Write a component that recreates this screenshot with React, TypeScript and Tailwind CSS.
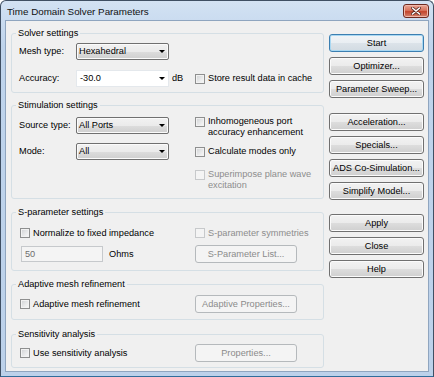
import React from "react";

function Check({ disabled }: { disabled?: boolean }) {
  return (
    <span
      className={
        "block w-[10px] h-[10px] shrink-0 border " +
        (disabled
          ? "border-[#c7c9cb] bg-[#f4f4f4]"
          : "border-[#8e8f8f] bg-[linear-gradient(135deg,#cfd1d3_0%,#e6e7e8_50%,#fbfbfb_100%)] shadow-[inset_0_0_0_1px_#f2f2f2]")
      }
    />
  );
}

function CheckRow({
  label,
  lines,
  disabled,
  className = "",
}: {
  label?: string;
  lines?: string[];
  disabled?: boolean;
  className?: string;
}) {
  const ls = lines ?? [label ?? ""];
  return (
    <div className={"flex items-start gap-[3px] " + className}>
      <span className="mt-[0.5px]">
        <Check disabled={disabled} />
      </span>
      <div className={"flex flex-col leading-[11px] " + (disabled ? "text-[#8d8d8d]" : "text-black")}>
        {ls.map((l) => (
          <span key={l} className="whitespace-nowrap">
            {l}
          </span>
        ))}
      </div>
    </div>
  );
}

function Btn({
  children,
  disabled,
  primary,
  className = "",
}: {
  children: React.ReactNode;
  disabled?: boolean;
  primary?: boolean;
  className?: string;
}) {
  const base = "h-[18px] flex items-center justify-center rounded-[3px] border whitespace-nowrap leading-[11px] ";
  const style = disabled
    ? "border-[#b5b9bc] bg-[#f4f4f4] text-[#8b8b8b]"
    : primary
    ? "border-[#3c7fb1] bg-[linear-gradient(#f1f4f7_0%,#e9eef2_50%,#dce3e9_51%,#d2dbe2_100%)] shadow-[inset_0_0_0_1px_#a9d8f2] text-black"
    : "border-[#707070] bg-[linear-gradient(#f2f2f2_0%,#ebebeb_50%,#dddddd_51%,#cfcfcf_100%)] shadow-[inset_0_0_0_1px_#fbfbfb] text-black";
  return <div className={base + style + " " + className}>{children}</div>;
}

function Arrow() {
  return (
    <svg width="6" height="3" viewBox="0 0 6 3" className="shrink-0">
      <polygon points="0,0 6,0 3,3" fill="#000" />
    </svg>
  );
}

function Select({ value }: { value: string }) {
  return (
    <div className="w-[93px] h-[17px] flex items-center justify-between pl-[2px] pr-[3px] rounded-[2px] border border-[#707070] bg-[linear-gradient(#f2f2f2_0%,#ebebeb_50%,#dddddd_51%,#cfcfcf_100%)] shadow-[inset_0_0_0_1px_#fbfbfb]">
      <span className="leading-[11px]">{value}</span>
      <Arrow />
    </div>
  );
}

function Group({
  title,
  children,
  className = "",
  bodyClass = "",
}: {
  title: string;
  children: React.ReactNode;
  className?: string;
  bodyClass?: string;
}) {
  return (
    <fieldset className={"border border-[#d5dfe5] rounded-[3px] " + className}>
      <legend className="ml-[4px] px-[2px] h-[13px] leading-[13px] text-black whitespace-nowrap">{title}</legend>
      <div className={bodyClass}>{children}</div>
    </fieldset>
  );
}

export default function App() {
  return (
    <div className="w-[434px] h-[377px] font-['Liberation_Sans',Arial,sans-serif] text-[9.2px] leading-[11px] text-black bg-white">
      <div className="w-full h-full flex flex-col rounded-t-[6px] border border-[#3f4f63] border-b-[#2f6d9a] bg-[linear-gradient(#d3e2f3_0%,#bfd4ec_12%,#bcd1ea_100%)]">
        {/* title bar */}
        <div className="h-[19px] shrink-0 flex items-start justify-between pl-[6px] pr-[4px]">
          <span className="mt-[5px] text-[9.8px] leading-[12px] text-[#111]">Time Domain Solver Parameters</span>
          <div className="mt-[3px] w-[26px] h-[14px] rounded-[3px] border border-[#6e2a20] bg-[linear-gradient(#e9a696_0%,#d8745e_45%,#c4452c_55%,#d3836f_100%)] shadow-[inset_0_0_0_1px_#f0b8aa] flex items-center justify-center">
            <svg width="10" height="8" viewBox="0 0 10 8">
              <path d="M1.5 1 L8.5 7 M8.5 1 L1.5 7" stroke="#5a2a22" strokeWidth="3" strokeLinecap="round" />
              <path d="M1.5 1 L8.5 7 M8.5 1 L1.5 7" stroke="#ffffff" strokeWidth="1.6" strokeLinecap="round" />
            </svg>
          </div>
        </div>
        {/* client area */}
        <div className="flex-1 mx-[4px] mb-[4px] border border-[#8fa5bf] bg-[#f0f0f0] flex">
          {/* left column */}
          <div className="ml-[5px] w-[313px] pt-[6px] flex flex-col">
            <Group title="Solver settings" bodyClass="pt-[3px] pb-[5px] pl-[7px] flex flex-col gap-[10px]">
              <div className="h-[17px] flex items-center">
                <span className="w-[57px]">Mesh type:</span>
                <Select value="Hexahedral" />
              </div>
              <div className="h-[17px] grid grid-cols-[176px_1fr] items-center">
                <div className="flex items-center">
                  <span className="w-[57px]">Accuracy:</span>
                  <div className="w-[93px] h-[17px] flex items-center justify-between pl-[3px] pr-[3px] border border-[#e4e8ec] bg-white">
                    <span>-30.0</span>
                    <Arrow />
                  </div>
                  <span className="ml-[3px]">dB</span>
                </div>
                <CheckRow label="Store result data in cache" />
              </div>
            </Group>

            <Group title="Stimulation settings" className="mt-[6px]" bodyClass="pl-[7px] pb-[7px] grid grid-cols-[176px_1fr]">
              <div className="pt-[5px] flex flex-col gap-[9px]">
                <div className="h-[17px] flex items-center">
                  <span className="w-[57px]">Source type:</span>
                  <Select value="All Ports" />
                </div>
                <div className="h-[17px] flex items-center">
                  <span className="w-[57px]">Mode:</span>
                  <Select value="All" />
                </div>
              </div>
              <div className="pt-[4px] flex flex-col">
                <CheckRow lines={["Inhomogeneous port", "accuracy enhancement"]} />
                <CheckRow label="Calculate modes only" className="mt-[8px]" />
                <CheckRow lines={["Superimpose plane wave", "excitation"]} disabled className="mt-[12px]" />
              </div>
            </Group>

            <Group title="S-parameter settings" className="mt-[7px]" bodyClass="pt-[8px] pb-[7px] pl-[7px] grid grid-cols-[176px_1fr] gap-y-[6px]">
              <div className="h-[12px] flex items-center ml-[1px]">
                <CheckRow label="Normalize to fixed impedance" />
              </div>
              <div className="h-[12px] flex items-center">
                <CheckRow label="S-parameter symmetries" disabled />
              </div>
              <div className="h-[18px] flex items-center">
                <div className="ml-[2px] w-[82px] h-[16px] flex items-center pl-[3px] border border-[#c6c9cc] bg-[#f4f4f4] text-[#6d6d6d]">
                  50
                </div>
                <span className="ml-[6px]">Ohms</span>
              </div>
              <Btn disabled className="w-[102px]">
                S-Parameter List...
              </Btn>
            </Group>

            <Group title="Adaptive mesh refinement" className="mt-[7px]" bodyClass="pt-[4px] pb-[6px] pl-[7px] grid grid-cols-[176px_1fr]">
              <div className="h-[18px] flex items-center ml-[1px]">
                <CheckRow label="Adaptive mesh refinement" />
              </div>
              <Btn disabled className="w-[102px]">
                Adaptive Properties...
              </Btn>
            </Group>

            <Group title="Sensitivity analysis" className="mt-[8px]" bodyClass="pt-[3px] pb-[5px] pl-[7px] grid grid-cols-[176px_1fr]">
              <div className="h-[18px] flex items-center ml-[1px]">
                <CheckRow label="Use sensitivity analysis" />
              </div>
              <Btn disabled className="w-[102px]">
                Properties...
              </Btn>
            </Group>
          </div>

          {/* right column */}
          <div className="ml-[5px] w-[95px] pt-[13px] flex flex-col">
            <div className="flex flex-col gap-[5px]">
              <Btn primary>Start</Btn>
              <Btn>Optimizer...</Btn>
              <Btn>Parameter Sweep...</Btn>
            </div>
            <div className="mt-[15px] flex flex-col gap-[5px]">
              <Btn>Acceleration...</Btn>
              <Btn>Specials...</Btn>
              <Btn>ADS Co-Simulation...</Btn>
              <Btn>Simplify Model...</Btn>
            </div>
            <div className="mt-[14px] flex flex-col gap-[5px]">
              <Btn>Apply</Btn>
              <Btn>Close</Btn>
              <Btn>Help</Btn>
            </div>
          </div>
        </div>
      </div>
    </div>
  );
}
